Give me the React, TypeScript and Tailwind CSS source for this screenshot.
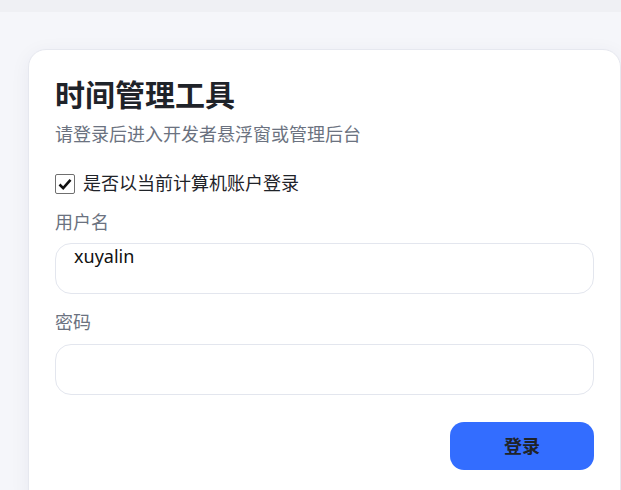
import React from "react";

export default function App() {
  return (
    <div
      className="min-h-screen w-full bg-[#f5f6fa] overflow-hidden"
      style={{ fontFamily: '"Noto Sans", "Noto Sans CJK SC", sans-serif' }}
    >
      <div className="h-[12px] w-full bg-[#eff0f4]" />
      <div className="pl-[28px] pt-[37px]">
        <div className="w-[593px] rounded-[18px] border border-[#e6e8ef] bg-white px-[26px] pb-[40px] pt-[27px] shadow-[0_4px_20px_rgba(30,40,80,0.06)]">
          <h1 className="text-[30px] font-bold leading-[36px] text-[#1f2329]">时间管理工具</h1>
          <p className="mt-[8px] text-[18px] leading-[27px] text-[#6b7280]">请登录后进入开发者悬浮窗或管理后台</p>
          <label className="mt-[22px] flex items-center gap-[8px] text-[18px] leading-[27px] text-[#1f2329]">
            <span className="flex h-[20px] w-[20px] items-center justify-center rounded-[2px] border-[1.5px] border-[#6f6f6f] bg-white">
              <svg width="16" height="16" viewBox="0 0 16 16">
                <path d="M2.5 8.5 L6.2 12.2 L13.5 3.8" fill="none" stroke="#111" strokeWidth="2.6" strokeLinejoin="miter" />
              </svg>
            </span>
            是否以当前计算机账户登录
          </label>
          <div className="mt-[12px] text-[18px] leading-[27px] text-[#6b7280]">用户名</div>
          <div className="mt-[7px] h-[51px] w-full rounded-[16px] border border-[#e3e6ee] bg-white px-[18px] text-[18px] leading-[24px] text-[#111]">
            xuyalin
          </div>
          <div className="mt-[15px] text-[18px] leading-[27px] text-[#6b7280]">密码</div>
          <div className="mt-[8px] h-[51px] w-full rounded-[16px] border border-[#e3e6ee] bg-white" />
          <div className="mt-[27px] flex justify-end">
            <button className="h-[48px] w-[144px] rounded-[14px] bg-[#336dff] text-[18px] font-bold text-[#1f2329]">
              登录
            </button>
          </div>
        </div>
      </div>
    </div>
  );
}
